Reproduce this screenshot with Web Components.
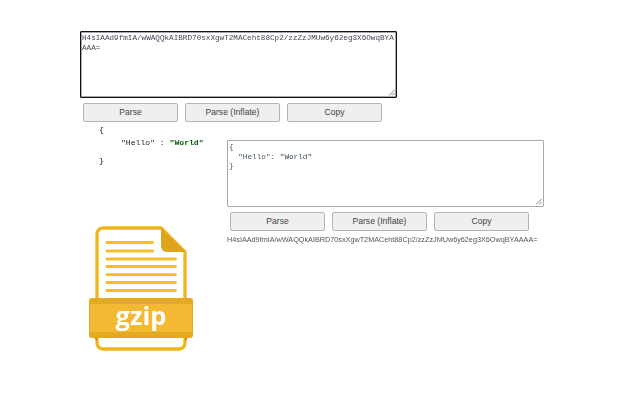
<!DOCTYPE html>
<html><head><meta charset="utf-8"><title>gzip</title>
<style>
html,body{margin:0;background:#fff}
body{width:640px;height:400px;overflow:hidden;font-family:"Liberation Sans",Arial,sans-serif}
</style></head><body>
<gz-app></gz-app>
<script>
function def(name,html){customElements.define(name,class extends HTMLElement{constructor(){super();this.attachShadow({mode:'open'}).innerHTML=html;}});}
def('gz-button',`<style>:host{display:block;width:95px;height:19px;box-sizing:border-box;border:1px solid #b4b4b4;border-radius:2px;background:#efefef;color:#444;font:8.6px/17px "Liberation Sans",Arial,sans-serif;text-align:center}</style><slot></slot>`);
def('gz-buttons',`<style>:host{display:flex;gap:7px;padding-left:3px;margin-top:5px}</style><slot></slot>`);
def('gz-area',`<style>:host{display:block;position:relative;width:317px;height:67px;box-sizing:border-box;border:1px solid #a9a9a9;border-radius:1px;background:#fff;padding:1px 0 0 1px;font:7.65px/10px "Liberation Mono","Courier New",monospace;color:#445;overflow-wrap:anywhere;white-space:pre-wrap}
:host([focus]){border:1px solid #111;box-shadow:inset 0 0 0 .5px #555}
.t{filter:blur(.3px)}
svg{position:absolute;right:1px;bottom:1px}</style><div class="t"><slot></slot></div><svg width="7" height="7" viewBox="0 0 7 7"><path d="M1 6.5 6.5 1M4 6.5 6.5 4" stroke="#666" stroke-width=".8" fill="none"/></svg>`);
def('gz-json',`<style>:host{display:block;font:8.1px/13px "Liberation Mono","Courier New",monospace;color:#222;padding:1px 0 0 19px;height:46px;filter:blur(.25px)}
.l{padding-left:22px;height:17.5px}.s{color:#0a5c0a;font-weight:bold}</style><div>{</div><div class="l">"Hello" : <span class="s">"World"</span></div><div>}</div>`);
def('gz-code',`<style>:host{display:block;padding-top:1px;font:7.7px/9.7px "Liberation Mono","Courier New",monospace;color:#444}
.k{color:#4a5a6a}.v{color:#3a4a5a}.p{color:#555}</style><span class="p">{</span>
  <span class="k">"Hello"</span><span class="p">:</span> <span class="v">"World"</span>
<span class="p">}</span>`);
def('gz-logo',`<style>:host{display:block;width:107px;height:127px}svg{display:block;filter:blur(.3px)}</style>
<svg width="107" height="127" viewBox="0 0 107 127">
<path d="M74 3H16a6 6 0 0 0-6 6V118a6 6 0 0 0 6 6H92a6 6 0 0 0 6-6V27Z" fill="#fff" stroke="#f2b41b" stroke-width="3.300" stroke-linejoin="round"/>
<path d="M74 3 99 27H80a6 6 0 0 1-6-6Z" fill="#e0a31c"/>
<path d="M20 17.500H65.500M20 26H65.500M20 34H88.500M20 41.500H88.500M20 49.700H88.500M20 57.500H88.500M20 65.500H88.500" stroke="#f5bd2b" stroke-width="2.800" stroke-linecap="round"/>
<path d="M2 107H10V116ZM106 107H98V116Z" fill="#b98412"/>
<path d="M2 76a3 3 0 0 1 3-3H103a3 3 0 0 1 3 3V110a3 3 0 0 1-3 3H5a3 3 0 0 1-3-3Z" fill="#e3a920"/>
<rect x="3" y="79" width="102" height="28" fill="#f3b932"/>
<text x="54" y="99.500" text-anchor="middle" font-family="'Open Sans',sans-serif" font-weight="700" font-size="25.500" fill="#fff">gzip</text>
</svg>`);
def('gz-app',`<style>:host{display:block;padding:31px 0 0 80px}
.row{display:flex;margin-top:0}.left{width:147px}.left gz-logo{margin:56px 0 0 7px}.right{padding-top:18px}
.out{font:7.26px/10px "Liberation Sans",Arial,sans-serif;color:#555;margin-top:4px;white-space:nowrap;filter:blur(.2px)}</style>
<gz-area focus>H4sIAAd9fmIA/wWAQQkAIBRD70sxXgwT2MACeht88Cp2/zzZzJMUw6y62eg3X6OwqBYAAAA=</gz-area>
<gz-buttons><gz-button>Parse</gz-button><gz-button>Parse (Inflate)</gz-button><gz-button>Copy</gz-button></gz-buttons>
<div class="row"><div class="left"><gz-json></gz-json><gz-logo></gz-logo></div>
<div class="right"><gz-area><gz-code></gz-code></gz-area>
<gz-buttons><gz-button>Parse</gz-button><gz-button>Parse (Inflate)</gz-button><gz-button>Copy</gz-button></gz-buttons>
<div class="out">H4sIAAd9fmIA/wWAQQkAIBRD70sxXgwT2MACeht88Cp2/zzZzJMUw6y62eg3X6OwqBYAAAA=</div></div></div>`);
</script></body></html>
